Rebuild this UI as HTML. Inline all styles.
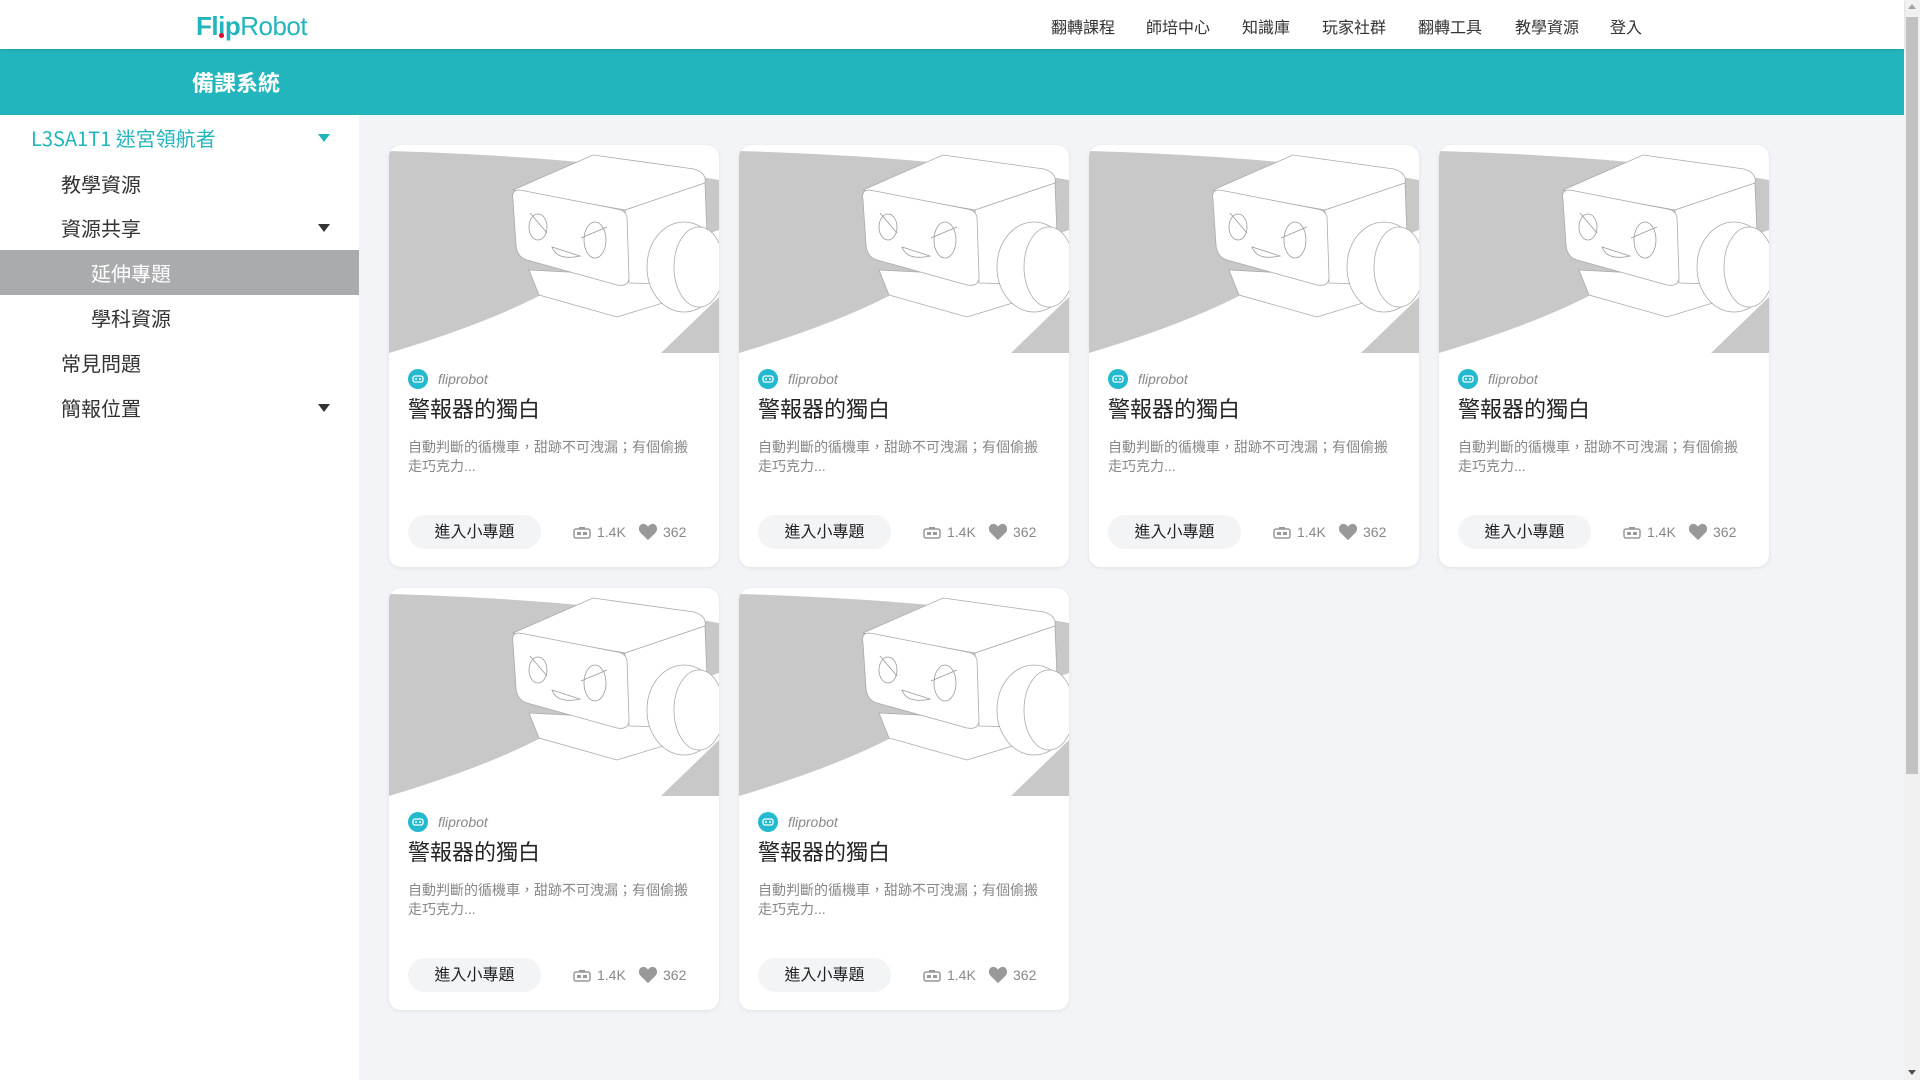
<!DOCTYPE html>
<html><head><meta charset="utf-8">
<style>
*{margin:0;padding:0;box-sizing:border-box}
body{width:1920px;height:1080px;overflow:hidden;background:#f3f4f8;font-family:"Liberation Sans","Noto Sans CJK TC",sans-serif;position:relative}
.hdr{position:absolute;left:0;top:0;width:1904px;height:49px;background:#fff;box-shadow:0 1px 3px rgba(0,0,0,.12);z-index:2}
.logo{position:absolute;left:196px;top:11px;font-size:26px;color:#23b5bd;letter-spacing:-0.5px}
.logo b{font-weight:bold}
.nav{position:absolute;top:14px;font-size:16px;color:#333}
.bar{position:absolute;left:0;top:49px;width:1904px;height:66px;background:#23b5bd}
.bar span{position:absolute;left:192px;top:18px;color:#fff;font-size:22px;font-weight:bold;font-family:"Noto Sans CJK TC",sans-serif;line-height:30px}
.side{position:absolute;left:0;top:115px;width:359px;height:965px;background:#fff}
.it{position:absolute;font-size:20px;color:#333;line-height:24px;font-family:"Noto Sans CJK TC",sans-serif}
.sel{position:absolute;left:0;top:135px;width:359px;height:45px;background:#aaabad}
.tri{position:absolute;left:318px;width:0;height:0;border-left:6px solid transparent;border-right:6px solid transparent;border-top:8px solid #333}
.card{position:absolute;width:330px;height:422px;background:#fff;border-radius:12px;overflow:hidden;box-shadow:0 1px 4px rgba(0,0,0,.08)}
.card svg.img{position:absolute;left:0;top:0}
.av{position:absolute;left:19px;top:224px;width:20px;height:20px;border-radius:50%;background:#23b9cf}
.nm{position:absolute;left:49px;top:226px;font-size:14px;font-style:italic;color:#888}
.tt{position:absolute;left:19px;top:247px;font-size:22px;color:#222}
.ds{position:absolute;left:19px;top:293px;width:292px;font-size:14px;line-height:19px;color:#888}
.bt{position:absolute;left:19px;top:370px;width:133px;height:34px;border-radius:17px;background:#f3f4f6;font-size:16px;color:#222;text-align:center;line-height:36px}
.st{position:absolute;top:377px;font-size:14px;color:#888;line-height:20px}
.sb{position:absolute;left:1904px;top:0;width:16px;height:1080px;background:#f1f1f1}
.th{position:absolute;left:1906px;top:17px;width:12px;height:757px;background:#c1c1c1}
</style></head><body>
<div class="hdr">
<div class="logo"><b>Fl</b><b>i</b><b>p</b>Robot</div>
<div style="position:absolute;left:219px;top:33px;width:5px;height:5px;border-radius:50%;background:#e0002a"></div>
<span class="nav" style="left:1051px">翻轉課程</span>
<span class="nav" style="left:1146px">師培中心</span>
<span class="nav" style="left:1242px">知識庫</span>
<span class="nav" style="left:1322px">玩家社群</span>
<span class="nav" style="left:1418px">翻轉工具</span>
<span class="nav" style="left:1515px">教學資源</span>
<span class="nav" style="left:1610px">登入</span>
</div>
<div class="bar"><span>備課系統</span></div>
<div class="side">
<div class="sel"></div>
<div class="it" style="left:31px;top:11px;color:#23b5bd">L3SA1T1 迷宮領航者</div>
<div class="tri" style="top:19px;border-top-color:#23b5bd"></div>
<div class="it" style="left:61px;top:57px">教學資源</div>
<div class="it" style="left:61px;top:101px">資源共享</div>
<div class="tri" style="top:109px"></div>
<div class="it" style="left:91px;top:146px;color:#fff">延伸專題</div>
<div class="it" style="left:91px;top:191px">學科資源</div>
<div class="it" style="left:61px;top:236px">常見問題</div>
<div class="it" style="left:61px;top:281px">簡報位置</div>
<div class="tri" style="top:289px"></div>
</div>

<div id="cards"></div>
<script>
var svg='<svg class="img" width="330" height="208" viewBox="0 0 330 208"><rect width="330" height="208" fill="#c8c8c8"/><path d="M0,0 L330,0 L330,35 Q200,12 0,6 Z" fill="#fff"/><path d="M0,208 Q110,175 170,140 L330,85 L330,152 L272,208 Z" fill="#fff"/><g fill="#fff" stroke="#aaa" stroke-width="0.8"><path d="M140,125 L150,150 L228,172 L300,150 L300,110 L236,130 Z"/><path d="M124,45 L204,10 L305,24 Q318,28 316,38 L236,65 Z"/><path d="M236,65 L316,38 L320,140 L240,138 Z"/><path d="M130,45 Q122,45 124,55 L127,100 Q128,112 138,115 L228,140 Q240,142 240,132 L238,72 Q236,65 228,64 L136,46 Z"/><ellipse cx="295" cy="122" rx="37" ry="45"/><ellipse cx="310" cy="122" rx="25" ry="40"/></g><g fill="none" stroke="#999" stroke-width="0.8"><ellipse cx="149" cy="82" rx="9" ry="13"/><ellipse cx="206" cy="95" rx="11" ry="18"/><path d="M141,68 L158,88"/><path d="M192,93 L218,82"/><path d="M163,102 Q168,116 191,111 Z"/></g></svg>';
var pos=[[389,145],[739,145],[1089,145],[1439,145],[389,588],[739,588]];
var h='';
pos.forEach(function(p){h+='<div class="card" style="left:'+p[0]+'px;top:'+p[1]+'px">'+svg+
'<div class="av"><svg width="20" height="20"><rect x="5" y="7" width="10" height="6" rx="2" fill="none" stroke="#fff" stroke-width="1.3"/><circle cx="8" cy="10" r="1" fill="#fff"/><circle cx="12" cy="10" r="1" fill="#fff"/></svg></div>'+
'<div class="nm">fliprobot</div><div class="tt">警報器的獨白</div><div class="ds">自動判斷的循機車，甜跡不可洩漏；有個偷搬走巧克力...</div><div class="bt">進入小專題</div>'+
'<svg style="position:absolute;left:184px;top:382px" width="18" height="12"><rect x="1" y="2" width="16" height="9" rx="2" fill="none" stroke="#999" stroke-width="1.5"/><rect x="4" y="5" width="4" height="3" fill="#999"/><rect x="10" y="5" width="4" height="3" fill="#999"/><rect x="6" y="0" width="6" height="2" fill="#999"/></svg>'+
'<div class="st" style="left:208px">1.4K</div>'+
'<svg style="position:absolute;left:249px;top:378px" width="20" height="18" viewBox="0 0 24 22"><path d="M12,21 L3,12 C-1,8 1,1 6.5,1 C9,1 11,3 12,4.5 C13,3 15,1 17.5,1 C23,1 25,8 21,12 Z" fill="#999"/></svg>'+
'<div class="st" style="left:274px">362</div></div>';});
document.getElementById('cards').innerHTML=h;
</script>
<div class="sb"></div><div class="th"></div>
<div style="position:absolute;left:1908px;top:4px;border-left:4px solid transparent;border-right:4px solid transparent;border-bottom:5px solid #a3a3a3"></div>
<div style="position:absolute;left:1908px;top:1070px;border-left:4px solid transparent;border-right:4px solid transparent;border-top:5px solid #505050"></div>
</body></html>
